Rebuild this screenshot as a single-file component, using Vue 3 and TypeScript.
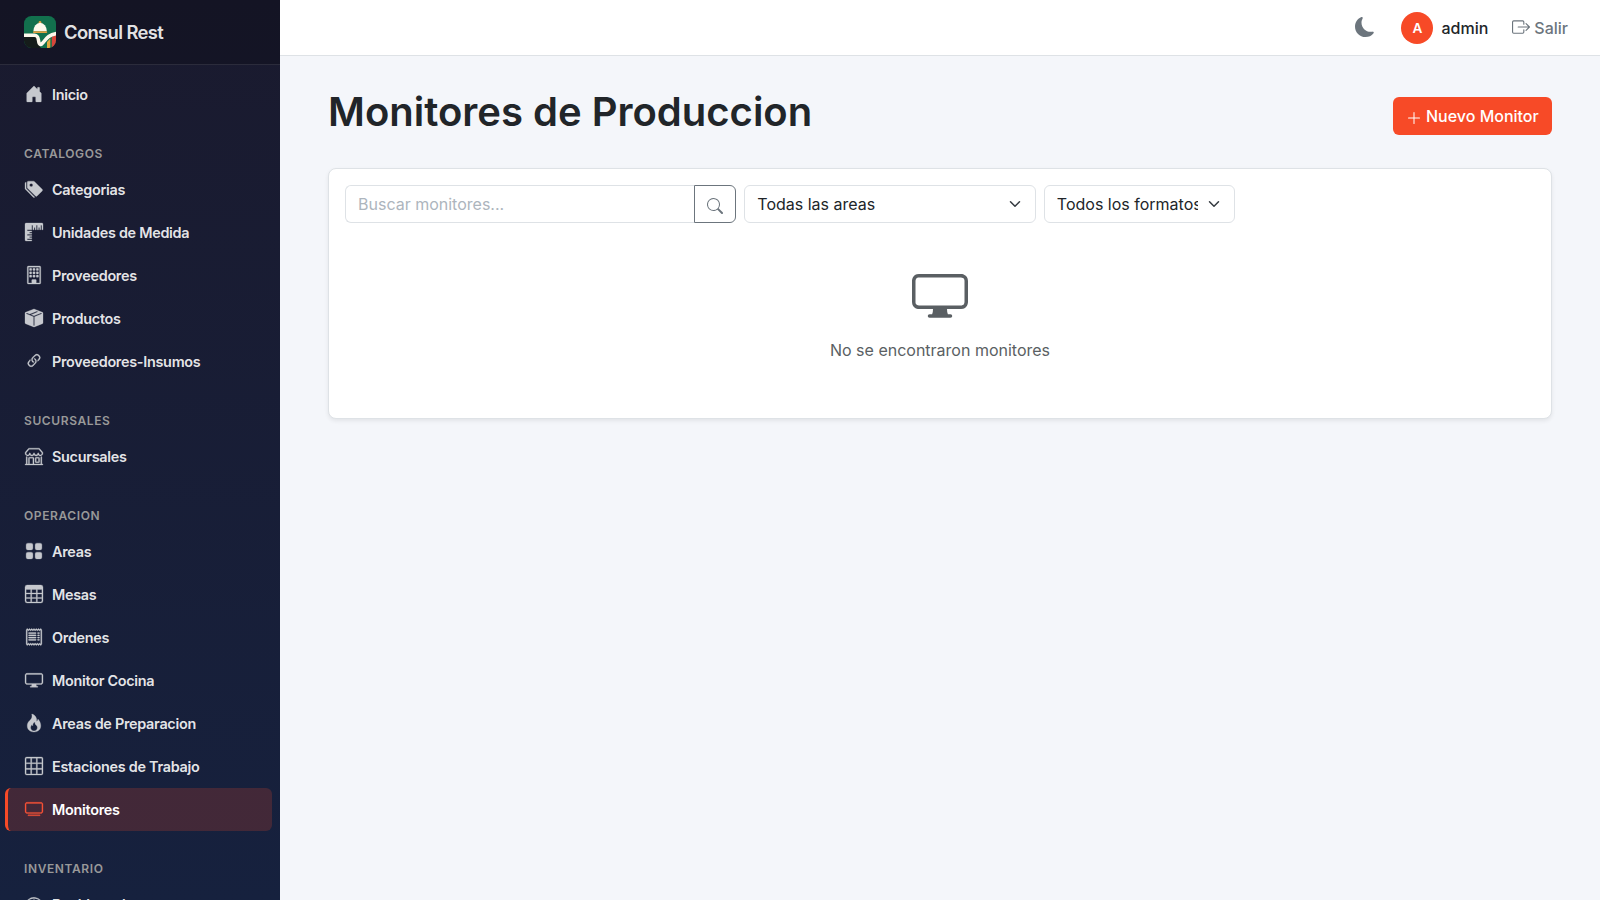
<script setup lang="ts">
interface NavItem { label: string; icon: string; active?: boolean }
interface NavGroup { title?: string; items: NavItem[] }

const windows = [2.5, 5.5, 8.5]
  .flatMap((y) => [4, 7, 10].map((x) => `M${x} ${y}a.5.5 0 0 1 .5-.5h1a.5.5 0 0 1 .5.5v1a.5.5 0 0 1-.5.5h-1a.5.5 0 0 1-.5-.5z`))
  .join('')
const receiptLines = [4.5, 6.5, 8.5, 10.5]
  .map((y) => `M3 ${y}a.5.5 0 0 1 .5-.5h6a.5.5 0 1 1 0 1h-6a.5.5 0 0 1-.5-.5M11 ${y}a.5.5 0 0 1 .5-.5h1a.5.5 0 0 1 0 1h-1a.5.5 0 0 1-.5-.5`)
  .join('')

const icons: Record<string, string> = {
  house: 'M6.5 14.5v-3.505c0-.245.25-.495.5-.495h2c.25 0 .5.25.5.5v3.5a.5.5 0 0 0 .5.5h4a.5.5 0 0 0 .5-.5v-7a.5.5 0 0 0-.146-.354L13 5.793V2.5a.5.5 0 0 0-.5-.5h-1a.5.5 0 0 0-.5.5v1.293L8.354 1.146a.5.5 0 0 0-.708 0l-6 6A.5.5 0 0 0 1.5 7.5v7a.5.5 0 0 0 .5.5h4a.5.5 0 0 0 .5-.5',
  tags: 'M2 2a1 1 0 0 1 1-1h4.586a1 1 0 0 1 .707.293l7 7a1 1 0 0 1 0 1.414l-4.586 4.586a1 1 0 0 1-1.414 0l-7-7A1 1 0 0 1 2 6.586zm3.5 4a1.5 1.5 0 1 0 0-3 1.5 1.5 0 0 0 0 3M1.293 7.793A1 1 0 0 1 1 7.086V2a1 1 0 0 0-1 1v4.586a1 1 0 0 0 .293.707l7 7a1 1 0 0 0 1.414 0l.043-.043z',
  rulers: 'M1 0a1 1 0 0 0-1 1v14a1 1 0 0 0 1 1h5v-1H2v-1h4v-1H4v-1h2v-1H2v-1h4V9H4V8h2V7H2V6h4V2h1v4h1V4h1v2h1V2h1v4h1V4h1v2h1V2h1v4h1V1a1 1 0 0 0-1-1z',
  building: windows + 'M2 1a1 1 0 0 1 1-1h10a1 1 0 0 1 1 1v14a1 1 0 0 1-1 1H3a1 1 0 0 1-1-1zm11 0H3v14h3v-2.5a.5.5 0 0 1 .5-.5h3a.5.5 0 0 1 .5.5V15h3z',
  box: 'M15.528 2.973a.75.75 0 0 1 .472.696v8.662a.75.75 0 0 1-.472.696l-7.25 2.9a.75.75 0 0 1-.557 0l-7.25-2.9A.75.75 0 0 1 0 12.331V3.669a.75.75 0 0 1 .471-.696L7.443.184l.01-.003.268-.108a.75.75 0 0 1 .558 0l.269.108.01.003zM10.404 2 4.25 4.461 1.846 3.5 1 3.839v.4l6.5 2.6v7.922l.5.2.5-.2V6.84l6.5-2.6v-.4l-.846-.339L8 5.961 5.596 5l6.154-2.461z',
  link: 'M4.715 6.542 3.343 7.914a3 3 0 1 0 4.243 4.243l1.828-1.829A3 3 0 0 0 8.586 5.5L8 6.086a1 1 0 0 0-.154.199 2 2 0 0 1 .861 3.337L6.88 11.45a2 2 0 1 1-2.83-2.83l.793-.792a4 4 0 0 1-.128-1.287zM6.586 4.672A3 3 0 0 0 7.414 9.5l.775-.776a2 2 0 0 1-.896-3.346L9.12 3.55a2 2 0 1 1 2.83 2.83l-.793.792c.112.42.155.855.128 1.287l1.372-1.372a3 3 0 1 0-4.243-4.243z',
  shop: 'M2.97 1.35A1 1 0 0 1 3.73 1h8.54a1 1 0 0 1 .76.35l2.609 3.044A1.5 1.5 0 0 1 16 5.37v.255a2.375 2.375 0 0 1-4.25 1.458A2.37 2.37 0 0 1 9.875 8 2.37 2.37 0 0 1 8 7.083 2.37 2.37 0 0 1 6.125 8a2.37 2.37 0 0 1-1.875-.917A2.375 2.375 0 0 1 0 5.625V5.37a1.5 1.5 0 0 1 .361-.976zm1.78 4.275a1.375 1.375 0 0 0 2.75 0 .5.5 0 0 1 1 0 1.375 1.375 0 0 0 2.75 0 .5.5 0 0 1 1 0 1.375 1.375 0 1 0 2.75 0V5.37a.5.5 0 0 0-.12-.325L12.27 2H3.73L1.12 5.045A.5.5 0 0 0 1 5.37v.255a1.375 1.375 0 0 0 2.75 0 .5.5 0 0 1 1 0M1.5 8.5A.5.5 0 0 1 2 9v6h1v-5a1 1 0 0 1 1-1h3a1 1 0 0 1 1 1v5h6V9a.5.5 0 0 1 1 0v6h.5a.5.5 0 0 1 0 1H.5a.5.5 0 0 1 0-1H1V9a.5.5 0 0 1 .5-.5M4 15h3v-5H4zm5-5a1 1 0 0 1 1-1h2a1 1 0 0 1 1 1v3a1 1 0 0 1-1 1h-2a1 1 0 0 1-1-1zm3 0h-2v3h2z',
  grid: 'M1 2.5A1.5 1.5 0 0 1 2.5 1h3A1.5 1.5 0 0 1 7 2.5v3A1.5 1.5 0 0 1 5.5 7h-3A1.5 1.5 0 0 1 1 5.5zm8 0A1.5 1.5 0 0 1 10.5 1h3A1.5 1.5 0 0 1 15 2.5v3A1.5 1.5 0 0 1 13.5 7h-3A1.5 1.5 0 0 1 9 5.5zm-8 8A1.5 1.5 0 0 1 2.5 9h3A1.5 1.5 0 0 1 7 10.5v3A1.5 1.5 0 0 1 5.5 15h-3A1.5 1.5 0 0 1 1 13.5zm8 0A1.5 1.5 0 0 1 10.5 9h3a1.5 1.5 0 0 1 1.5 1.5v3a1.5 1.5 0 0 1-1.5 1.5h-3A1.5 1.5 0 0 1 9 13.5z',
  table: 'M0 2a2 2 0 0 1 2-2h12a2 2 0 0 1 2 2v12a2 2 0 0 1-2 2H2a2 2 0 0 1-2-2zm15 2h-4v3h4zm0 4h-4v3h4zm0 4h-4v3h3a1 1 0 0 0 1-1zm-5 3v-3H6v3zm-5 0v-3H1v2a1 1 0 0 0 1 1zm-4-4h4V8H1zm0-4h4V4H1zm5-3v3h4V4zm4 4H6v3h4z',
  receipt: 'M1.92.506a.5.5 0 0 1 .434.14L3 1.293l.646-.647a.5.5 0 0 1 .708 0L5 1.293l.646-.647a.5.5 0 0 1 .708 0L7 1.293l.646-.647a.5.5 0 0 1 .708 0L9 1.293l.646-.647a.5.5 0 0 1 .708 0l.646.647.646-.647a.5.5 0 0 1 .708 0l.646.647.646-.647a.5.5 0 0 1 .801.13l.5 1A.5.5 0 0 1 15 2v12a.5.5 0 0 1-.053.224l-.5 1a.5.5 0 0 1-.8.13L13 14.707l-.646.647a.5.5 0 0 1-.708 0L11 14.707l-.646.647a.5.5 0 0 1-.708 0L9 14.707l-.646.647a.5.5 0 0 1-.708 0L7 14.707l-.646.647a.5.5 0 0 1-.708 0L5 14.707l-.646.647a.5.5 0 0 1-.708 0L3 14.707l-.646.647a.5.5 0 0 1-.801-.13l-.5-1A.5.5 0 0 1 1 14V2a.5.5 0 0 1 .053-.224l.5-1a.5.5 0 0 1 .367-.27m.217 1.338L2 2.118v11.764l.137.274.51-.51a.5.5 0 0 1 .707 0l.646.647.646-.646a.5.5 0 0 1 .708 0l.646.646.646-.646a.5.5 0 0 1 .708 0l.646.646.646-.646a.5.5 0 0 1 .708 0l.646.646.646-.646a.5.5 0 0 1 .708 0l.646.646.646-.646a.5.5 0 0 1 .708 0l.509.509.137-.274V2.118l-.137-.274-.51.51a.5.5 0 0 1-.707 0L12 1.707l-.646.647a.5.5 0 0 1-.708 0L10 1.707l-.646.647a.5.5 0 0 1-.708 0L8 1.707l-.646.647a.5.5 0 0 1-.708 0L6 1.707l-.646.647a.5.5 0 0 1-.708 0L4 1.707l-.646.647a.5.5 0 0 1-.708 0z' + receiptLines,
  display: 'M0 4s0-2 2-2h12s2 0 2 2v6s0 2-2 2h-4q0 1 .25 1.5H11a.5.5 0 0 1 0 1H5a.5.5 0 0 1 0-1h.75Q6 13 6 12H2s-2 0-2-2zm1.398-.855a.76.76 0 0 0-.254.302A1.5 1.5 0 0 0 1 4.01V10c0 .325.078.502.145.602q.105.156.302.254a1.5 1.5 0 0 0 .538.143L2.01 11H14c.325 0 .502-.078.602-.145a.76.76 0 0 0 .254-.302 1.5 1.5 0 0 0 .143-.538L15 9.99V4c0-.325-.078-.502-.145-.602a.76.76 0 0 0-.302-.254A1.5 1.5 0 0 0 13.99 3H2c-.325 0-.502.078-.602.145',
  fire: 'M8 16c3.314 0 6-2 6-5.5 0-1.5-.5-4-2.5-6 .25 1.5-1.25 2-1.25 2C11 4 9 .5 6 0c.357 2 .5 4-2 6-1.25 1-2 2.729-2 4.5C2 14 4.686 16 8 16m0-1c-1.657 0-3-1-3-2.75 0-.75.25-2 1.25-3C6.125 10 7 10.5 7 10.5c-.375-1.25.5-3.25 2-3.5-.179 1-.25 2 1 3 .625.5 1 1.364 1 2.25C11 14 9.657 15 8 15',
  grid3: 'M0 1.5A1.5 1.5 0 0 1 1.5 0h13A1.5 1.5 0 0 1 16 1.5v13a1.5 1.5 0 0 1-1.5 1.5h-13A1.5 1.5 0 0 1 0 14.5zM1.5 1a.5.5 0 0 0-.5.5V5h4V1zM5 6H1v4h4zm1 4h4V6H6zm-1 1H1v3.5a.5.5 0 0 0 .5.5H5zm1 0v4h4v-4zm5 0v4h3.5a.5.5 0 0 0 .5-.5V11zm0-1h4V6h-4zm0-5h4V1.5a.5.5 0 0 0-.5-.5H11zm-1 0V1H6v4z',
  tv: 'M2.5 13.5A.5.5 0 0 1 3 13h10a.5.5 0 0 1 0 1H3a.5.5 0 0 1-.5-.5M13.991 3l.024.001a1.5 1.5 0 0 1 .538.143.76.76 0 0 1 .302.254c.067.1.145.277.145.602v5.991l-.001.024a1.5 1.5 0 0 1-.143.538.76.76 0 0 1-.254.302c-.1.067-.277.145-.602.145H2.009l-.024-.001a1.5 1.5 0 0 1-.538-.143.76.76 0 0 1-.302-.254C1.078 10.502 1 10.325 1 10V4.009l.001-.024a1.5 1.5 0 0 1 .143-.538.76.76 0 0 1 .254-.302C1.498 3.078 1.675 3 2 3zM14 2H2C0 2 0 4 0 4v6c0 2 2 2 2 2h12c2 0 2-2 2-2V4c0-2-2-2-2-2',
  gauge: 'M8 4a.5.5 0 0 1 .5.5V6a.5.5 0 0 1-1 0V4.5A.5.5 0 0 1 8 4M0 10a8 8 0 1 1 15.547 2.661c-.442 1.253-1.845 1.602-2.932 1.25C11.309 13.488 9.475 13 8 13c-1.474 0-3.31.488-4.615.911-1.087.352-2.49.003-2.932-1.25A8 8 0 0 1 0 10m8-7a7 7 0 0 0-6.603 9.329c.203.575.923.876 1.68.63C4.397 12.533 6.358 12 8 12s3.604.532 4.923.96c.757.245 1.477-.056 1.68-.631A7 7 0 0 0 8 3',
  moon: 'M6 .278a.77.77 0 0 1 .08.858 7.2 7.2 0 0 0-.878 3.46c0 4.021 3.278 7.277 7.318 7.277q.792-.001 1.533-.16a.79.79 0 0 1 .81.316.73.73 0 0 1-.031.893A8.35 8.35 0 0 1 8.344 16C3.734 16 0 12.286 0 7.71 0 4.266 2.114 1.312 5.124.06A.75.75 0 0 1 6 .278',
  logout: 'M10 12.5a.5.5 0 0 1-.5.5h-8a.5.5 0 0 1-.5-.5v-9a.5.5 0 0 1 .5-.5h8a.5.5 0 0 1 .5.5v2a.5.5 0 0 0 1 0v-2A1.5 1.5 0 0 0 9.5 2h-8A1.5 1.5 0 0 0 0 3.5v9A1.5 1.5 0 0 0 1.5 14h8a1.5 1.5 0 0 0 1.5-1.5v-2a.5.5 0 0 0-1 0zM15.854 8.354a.5.5 0 0 0 0-.708l-3-3a.5.5 0 0 0-.708.708L14.293 7.5H5.5a.5.5 0 0 0 0 1h8.793l-2.147 2.146a.5.5 0 0 0 .708.708z',
  plus: 'M8 2a.5.5 0 0 1 .5.5v5h5a.5.5 0 0 1 0 1h-5v5a.5.5 0 0 1-1 0v-5h-5a.5.5 0 0 1 0-1h5v-5A.5.5 0 0 1 8 2',
  search: 'M11.742 10.344a6.5 6.5 0 1 0-1.397 1.398h-.001q.044.06.098.115l3.85 3.85a1 1 0 0 0 1.415-1.414l-3.85-3.85a1 1 0 0 0-.115-.1zM12 6.5a5.5 5.5 0 1 1-11 0 5.5 5.5 0 0 1 11 0',
}

const groups: NavGroup[] = [
  { items: [{ label: 'Inicio', icon: 'house' }] },
  {
    title: 'Catalogos',
    items: [
      { label: 'Categorias', icon: 'tags' },
      { label: 'Unidades de Medida', icon: 'rulers' },
      { label: 'Proveedores', icon: 'building' },
      { label: 'Productos', icon: 'box' },
      { label: 'Proveedores-Insumos', icon: 'link' },
    ],
  },
  { title: 'Sucursales', items: [{ label: 'Sucursales', icon: 'shop' }] },
  {
    title: 'Operacion',
    items: [
      { label: 'Areas', icon: 'grid' },
      { label: 'Mesas', icon: 'table' },
      { label: 'Ordenes', icon: 'receipt' },
      { label: 'Monitor Cocina', icon: 'display' },
      { label: 'Areas de Preparacion', icon: 'fire' },
      { label: 'Estaciones de Trabajo', icon: 'grid3' },
      { label: 'Monitores', icon: 'tv', active: true },
    ],
  },
  { title: 'Inventario', items: [{ label: 'Dashboard', icon: 'gauge' }] },
]
</script>

<template>
  <div class="app">
    <aside class="sidebar">
      <div class="brand">
        <svg class="logo" viewBox="0 0 32 32">
          <defs><clipPath id="logo-clip"><rect width="32" height="32" rx="7.5" /></clipPath></defs>
          <g clip-path="url(#logo-clip)">
            <rect width="32" height="32" fill="#12704d" />
            <path d="M0 20h12l3 9 2 3H0z" fill="#151c1a" />
            <path d="M23 26l3.300-3.500v10h-3.300z" fill="#e0a83f" />
            <path d="M27.800 21l4.200-2v14h-4.200z" fill="#d8453a" />
            <circle cx="16" cy="6.4" r="1.4" fill="#e0a040" />
            <path d="M9.4 15.300a6.700 8.600 0 0 1 13.400 0z" fill="#fdf8ec" />
            <rect x="9" y="15.200" width="14.200" height="1.900" rx=".8" fill="#e0a040" />
            <path d="M-1 19.300h11.500c2.800 0 3.500 1.500 4 5 .6 4.800 2.200 5.300 4.800 2 3.500-4.500 6.200-8 13.700-8.800" fill="none" stroke="#fdf8ec" stroke-width="3.500" />
          </g>
        </svg>
        <span>Consul Rest</span>
      </div>
      <nav class="nav">
        <div v-for="(group, i) in groups" :key="i">
          <div v-if="group.title" class="nav-title">{{ group.title }}</div>
          <a v-for="item in group.items" :key="item.label" class="nav-item" :class="{ active: item.active }">
            <svg class="nav-icon" viewBox="0 0 16 16"><path :d="icons[item.icon]" /></svg>
            <span>{{ item.label }}</span>
          </a>
        </div>
      </nav>
    </aside>

    <div class="main">
      <header class="topbar">
        <svg class="moon" viewBox="0 0 16 16"><path :d="icons.moon" /></svg>
        <div class="user"><span class="avatar">A</span><span>admin</span></div>
        <a class="logout"><svg viewBox="0 0 16 16"><path :d="icons.logout" /></svg>Salir</a>
      </header>
      <main class="content">
        <div class="heading">
          <h1>Monitores de Produccion</h1>
          <button class="primary"><svg viewBox="0 0 16 16"><path :d="icons.plus" /></svg>Nuevo Monitor</button>
        </div>
        <section class="card">
          <div class="filters">
            <div class="search">
              <input type="text" placeholder="Buscar monitores..." />
              <button><svg viewBox="0 0 16 16"><path :d="icons.search" /></svg></button>
            </div>
            <div class="select">
              <span>Todas las areas</span>
              <svg viewBox="0 0 16 16"><path d="m2 5 6 6 6-6" /></svg>
            </div>
            <div class="select">
              <span>Todos los formatos</span>
              <svg viewBox="0 0 16 16"><path d="m2 5 6 6 6-6" /></svg>
            </div>
          </div>
          <div class="empty">
            <svg viewBox="0 0 16 16"><path :d="icons.display" /></svg>
            <p>No se encontraron monitores</p>
          </div>
        </section>
      </main>
    </div>
  </div>
</template>

<style>
body { margin: 0; overflow: hidden; }
</style>

<style scoped>
* { box-sizing: border-box; }
svg { display: block; fill: currentColor; flex: none; }
button, input { font: inherit; }
.app {
  display: flex;
  width: 100%;
  height: 100vh;
  overflow: hidden;
  font: 400 16px/1.5 Inter, "Liberation Sans", sans-serif;
  color: #212529;
  background: #f4f6fa;
}
.sidebar {
  width: 280px;
  flex: none;
  overflow: hidden;
  background: linear-gradient(180deg, #1a1a2e 0%, #16213e 100%);
}
.brand {
  height: 65px;
  display: flex;
  align-items: center;
  gap: 8px;
  padding: 0 24px;
  background: rgba(0, 0, 0, 0.2);
  border-bottom: 1px solid rgba(255, 255, 255, 0.1);
  color: rgba(255, 255, 255, 0.9);
  font-size: 18.4px;
  font-weight: 600;
  letter-spacing: -0.63px;
}
.brand span { padding-top: 1px; }
.logo { width: 32px; height: 32px; }
.nav { padding-top: 8px; }
.nav-title {
  height: 52px;
  padding: 28px 24px 0;
  font-size: 12px;
  line-height: 19px;
  font-weight: 600;
  letter-spacing: 0.6px;
  text-transform: uppercase;
  color: #999;
}
.nav-item {
  height: 43px;
  margin: 0 8px 0 5px;
  padding-left: 16px;
  display: flex;
  align-items: center;
  gap: 8px;
  border-left: 3px solid transparent;
  border-radius: 6px;
  color: rgba(255, 255, 255, 0.9);
  font-size: 14.4px;
  font-weight: 560;
  letter-spacing: -0.28px;
}
.nav-item span { padding-top: 1px; }
.nav-icon {
  width: 20px;
  height: 18px;
  margin-top: -1px;
  color: #c6c8ce;
  stroke: currentColor;
  stroke-width: 0.25;
  overflow: visible;
}
.nav-item.active { background: rgba(247, 74, 39, 0.2); border-left-color: #f74a27; color: #fff; }
.nav-item.active .nav-icon { color: #f95236; }
.main { flex: 1; min-width: 0; }
.topbar {
  height: 56px;
  display: flex;
  align-items: center;
  justify-content: flex-end;
  gap: 24px;
  padding: 0 32px;
  background: #fff;
  border-bottom: 1px solid #dee2e6;
}
.moon { width: 20px; height: 20px; margin-right: 2px; margin-top: -2px; color: #6c757d; }
.user { display: flex; align-items: center; gap: 8px; font-weight: 500; font-size: 16px; }
.avatar {
  width: 32px;
  height: 32px;
  border-radius: 50%;
  background: #f74a27;
  color: #fff;
  display: flex;
  align-items: center;
  justify-content: center;
  padding-top: 1px;
  font-size: 13.6px;
  font-weight: 600;
}
.logout { display: flex; align-items: center; gap: 4px; color: #6c757d; font-weight: 450; }
.logout svg { width: 18px; height: 18px; margin-top: -2px; }
.content { padding: 32px 48px; }
.heading { display: flex; justify-content: space-between; height: 80px; }
h1 { margin: 0; font-size: 40px; line-height: 48px; font-weight: 560; letter-spacing: 0; }
.primary {
  width: 159px;
  height: 38px;
  margin-top: 9px;
  padding: 0 13px;
  display: flex;
  align-items: center;
  gap: 4px;
  border: 0;
  border-radius: 6px;
  background: #f74a27;
  color: #fff;
  font-weight: 540;
  white-space: nowrap;
}
.primary svg { width: 16px; height: 16px; margin-top: 3px; }
.card {
  height: 251px;
  padding: 16px;
  background: #fff;
  border: 1px solid #dee2e6;
  border-radius: 8px;
  box-shadow: 0 2px 4px rgba(0, 0, 0, 0.075);
}
.filters { display: grid; grid-template-columns: 391.33px 291.5px 191.67px; gap: 8px; }
.search { display: flex; height: 38px; }
.search input {
  flex: 1;
  min-width: 0;
  padding: 0 12px;
  border: 1px solid #dee2e6;
  border-right: 0;
  border-radius: 6px 0 0 6px;
  outline: 0;
  background: #fff;
}
.search input::placeholder { color: #adb5bd; opacity: 1; }
.search button {
  width: 42px;
  display: flex;
  align-items: center;
  justify-content: center;
  padding: 3px 0 0;
  border: 1px solid #6c757d;
  border-radius: 0 6px 6px 0;
  background: #fff;
  color: #6c757d;
}
.search svg { width: 16px; height: 16px; }
.select {
  height: 38px;
  display: flex;
  align-items: center;
  justify-content: space-between;
  gap: 8px;
  padding: 0 12px;
  border: 1px solid #dee2e6;
  border-radius: 6px;
}
.select span { overflow: hidden; white-space: nowrap; }
.select svg { width: 16px; height: 12px; fill: none; stroke: #343a40; stroke-width: 2; stroke-linecap: round; stroke-linejoin: round; }
.empty { padding-top: 44px; display: flex; flex-direction: column; align-items: center; color: #5a5f63; }
.empty svg { width: 56px; height: 56px; }
.empty p { margin: 15px 0 0; }
</style>
